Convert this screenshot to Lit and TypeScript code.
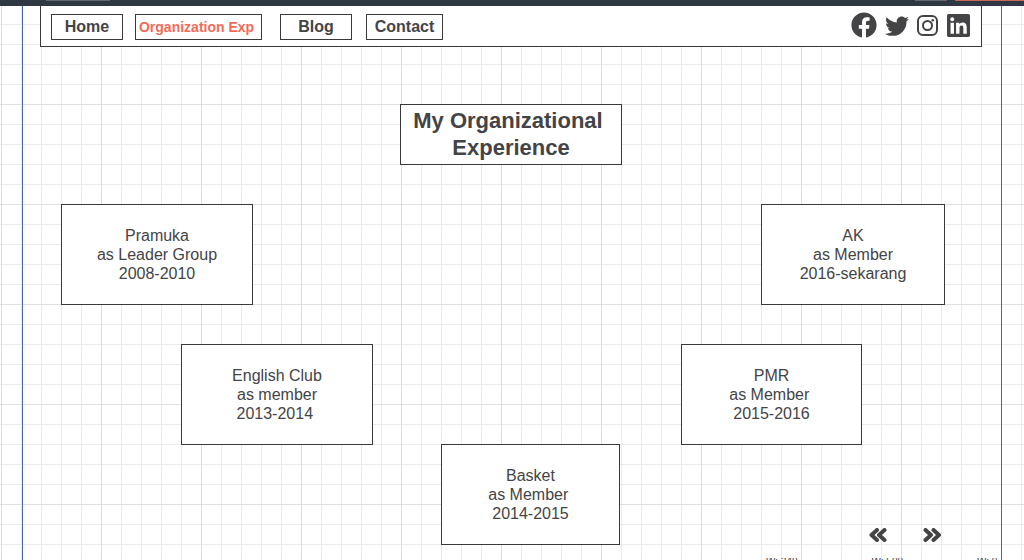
import { LitElement, html, css, svg } from "lit";
import { customElement, property } from "lit/decorators.js";
import { classMap } from "lit/directives/class-map.js";

interface Entry {
  x: number;
  y: number;
  width: number;
  lines: string[];
}

const ENTRIES: Entry[] = [
  { x: 61, y: 198, width: 192, lines: ["Pramuka", "as Leader Group", "2008-2010"] },
  { x: 181, y: 338, width: 192, lines: ["English Club", "as member", "2013-2014 "] },
  { x: 441, y: 438, width: 179, lines: ["Basket", "as Member ", "2014-2015"] },
  { x: 681, y: 338, width: 181, lines: ["PMR", "as Member ", "2015-2016"] },
  { x: 761, y: 198, width: 184, lines: ["AK", "as Member", "2016-sekarang"] },
];

const NAV = [
  { label: "Home", width: 72, active: false },
  { label: "Organization Exp ", width: 127, active: true },
  { label: "Blog", width: 72, active: false },
  { label: "Contact", width: 77, active: false },
];

const SOCIAL = [
  {
    name: "Facebook",
    art: svg`<svg viewBox="0 0 512 512" width="26" height="26"><path d="M504 256C504 119 393 8 256 8S8 119 8 256c0 123.800 90.700 226.400 209.250 245V327.700h-63V256h63v-54.640c0-62.150 37-96.480 93.670-96.480 27.140 0 55.520 4.840 55.520 4.840v61h-31.280c-30.800 0-40.410 19.120-40.410 38.730V256h68.780l-11 71.690h-57.780V501C413.310 482.380 504 379.780 504 256z"/></svg>`,
  },
  {
    name: "Twitter",
    art: svg`<svg viewBox="0 -24 512 512" width="24" height="24"><path d="M459.370 151.716c.325 4.548.325 9.097.325 13.645 0 138.720-105.583 298.558-298.558 298.558-59.452 0-114.680-17.219-161.137-47.106 8.447.974 16.568 1.299 25.340 1.299 49.055 0 94.213-16.568 130.274-44.832-46.132-.975-84.792-31.188-98.112-72.772 6.498.974 12.995 1.624 19.818 1.624 9.421 0 18.843-1.300 27.614-3.573-48.081-9.747-84.143-51.980-84.143-102.985v-1.299c13.969 7.797 30.214 12.670 47.431 13.319-28.264-18.843-46.781-51.005-46.781-87.391 0-19.492 5.197-37.360 14.294-52.954 51.655 63.675 129.300 105.258 216.365 109.807-1.624-7.797-2.599-15.918-2.599-24.040 0-57.828 46.782-104.934 104.934-104.934 30.213 0 57.502 12.670 76.670 33.137 23.715-4.548 46.456-13.320 66.599-25.340-7.798 24.366-24.366 44.833-46.132 57.827 21.117-2.273 41.584-8.122 60.426-16.243-14.292 20.791-32.161 39.308-52.628 54.253z"/></svg>`,
  },
  {
    name: "Instagram",
    art: svg`<svg viewBox="0 0 22 24" width="22" height="24"><rect x="1" y="3" width="19" height="19" rx="5" fill="none" stroke="currentColor" stroke-width="2"/><circle cx="10.500" cy="12.500" r="4.500" fill="none" stroke="currentColor" stroke-width="2"/><circle cx="15.800" cy="7.200" r="1.300"/></svg>`,
  },
  {
    name: "LinkedIn",
    art: svg`<svg viewBox="0 32 448 448" width="23" height="23"><path d="M416 32H31.900C14.300 32 0 46.500 0 64.300v383.400C0 465.500 14.300 480 31.900 480H416c17.600 0 32-14.500 32-32.300V64.300c0-17.800-14.400-32.300-32-32.300zM135.400 416H69V202.200h66.500V416zm-33.200-243c-21.300 0-38.500-17.300-38.500-38.500S80.900 96 102.200 96c21.200 0 38.500 17.300 38.500 38.500 0 21.300-17.200 38.500-38.500 38.500zm282.100 243h-66.400V312c0-24.800-.5-56.700-34.500-56.700-34.600 0-39.900 27-39.900 54.900V416h-66.400V202.200h63.700v29.200h.9c8.900-16.800 30.600-34.500 62.900-34.500 67.200 0 79.700 44.300 79.700 101.900V416z"/></svg>`,
  },
];

@customElement("experience-card")
class ExperienceCard extends LitElement {
  @property({ attribute: false }) lines: string[] = [];

  static styles = css`
    :host {
      display: block;
    }
    .card {
      box-sizing: border-box;
      border: 1px solid #3a3a3c;
      background: #fff;
      padding: 21px 0;
      text-align: center;
      font-size: 16px;
      line-height: 19px;
    }
    .line {
      margin: 0;
      white-space: pre;
    }
  `;

  render() {
    return html`<article class="card">
      ${this.lines.map((line) => html`<p class="line">${line}</p>`)}
    </article>`;
  }
}

@customElement("app-root")
class AppRoot extends LitElement {
  static styles = css`
    :host {
      display: flex;
      flex-direction: column;
      height: 100vh;
      overflow: hidden;
      background: #fff;
      color: #444446;
      font-family: "Liberation Sans", Arial, sans-serif;
    }
    .toolbar {
      flex: none;
      display: flex;
      align-items: flex-start;
      height: 6px;
      padding-left: 46px;
      background: #2f3742;
    }
    .tab {
      width: 64px;
      height: 1px;
      background: #626870;
    }
    .tab-small {
      width: 32px;
      margin-left: auto;
      margin-right: 8px;
    }
    .tab-accent {
      width: 69px;
      background: #c8655c;
    }
    .canvas {
      position: relative;
      flex: 1;
      display: flex;
      flex-direction: column;
      background-color: #fff;
      background-image: linear-gradient(90deg, #dedede 1px, transparent 1px),
        linear-gradient(#e0e0e0 1px, transparent 1px),
        linear-gradient(90deg, #ebebeb 1px, transparent 1px),
        linear-gradient(#ebebeb 1px, transparent 1px);
      background-size: 100px 100px, 100px 100px, 20px 20px, 20px 20px;
      background-position: 1px 98px, 1px 98px, 1px 18px, 1px 18px;
    }
    .page {
      flex: 1;
      display: flex;
      flex-direction: column;
      margin: 0 22px;
      border: solid #4a67a8;
      border-width: 0 1px;
    }
    .menu {
      display: flex;
      justify-content: space-between;
      margin: 0 19px 0 17px;
      padding: 6px 11px 6px 10px;
      border: 1px solid #3a3a3c;
      border-top: 0;
      background: #fff;
    }
    .links {
      display: grid;
      grid-template-columns: 84px 145px 86px auto;
      padding-top: 2px;
    }
    .link {
      box-sizing: border-box;
      height: 26px;
      border: 1px solid #3a3a3c;
      color: inherit;
      font-size: 16px;
      font-weight: bold;
      line-height: 24px;
      text-align: center;
      text-decoration: none;
      white-space: pre;
    }
    .active {
      color: #f26b57;
      font-size: 14px;
    }
    .social {
      display: flex;
      align-items: center;
      gap: 8px;
      height: 26px;
    }
    .icon {
      display: flex;
      color: inherit;
    }
    .icon svg {
      fill: currentColor;
    }
    .title {
      position: absolute;
      left: 400px;
      top: 98px;
      box-sizing: border-box;
      width: 222px;
      margin: 0;
      padding: 2px 0 3px;
      border: 1px solid #3a3a3c;
      background: #fff;
      font-size: 22px;
      line-height: 27px;
      text-align: center;
      white-space: pre;
    }
    .node {
      position: absolute;
    }
    .pager {
      display: flex;
      justify-content: flex-end;
      gap: 34px;
      margin-top: auto;
      padding: 0 59px 16px 0;
    }
    .step {
      display: flex;
      padding: 0;
      border: 0;
      background: none;
      color: inherit;
    }
    .marks {
      display: flex;
      justify-content: flex-end;
      gap: 74px;
      height: 2px;
      overflow: hidden;
      font-size: 10px;
      line-height: 8px;
      white-space: nowrap;
    }
    .mark-last {
      width: 24px;
      overflow: hidden;
    }
  `;

  render() {
    return html`
      <div class="toolbar">
        <span class="tab"></span>
        <span class="tab tab-small"></span>
        <span class="tab tab-accent"></span>
      </div>
      <main class="canvas">
        <div class="page">
          <header class="menu">
            <nav class="links">
              ${NAV.map(
                (item) => html`<a
                  class=${classMap({ link: true, active: item.active })}
                  style="width:${item.width}px"
                  href="#"
                  >${item.label}</a
                >`
              )}
            </nav>
            <div class="social">
              ${SOCIAL.map(
                (item) => html`<a class="icon" href="#" aria-label=${item.name}>${item.art}</a>`
              )}
            </div>
          </header>
          <div class="pager">
            <button class="step" aria-label="Previous">
              <svg width="20" height="14" viewBox="0 0 20 14" fill="none" stroke="currentColor" stroke-width="4">
                <path d="M9 2 3.500 7 9 12M16.500 2 11 7l5.500 5" stroke-linejoin="round" stroke-linecap="round" />
              </svg>
            </button>
            <button class="step" aria-label="Next">
              <svg width="20" height="14" viewBox="0 0 20 14" fill="none" stroke="currentColor" stroke-width="4">
                <path d="M3.500 2 9 7l-5.500 5M11.500 2 17 7l-5.500 5" stroke-linejoin="round" stroke-linecap="round" />
              </svg>
            </button>
          </div>
          <div class="marks">
            <span>W: 240</span>
            <span>W: 500</span>
            <span class="mark-last">W: 0</span>
          </div>
        </div>
        <h1 class="title">My Organizational <br />Experience</h1>
        ${ENTRIES.map(
          (entry) => html`<experience-card
            class="node"
            style="left:${entry.x}px;top:${entry.y}px;width:${entry.width}px"
            .lines=${entry.lines}
          ></experience-card>`
        )}
      </main>
    `;
  }
}
